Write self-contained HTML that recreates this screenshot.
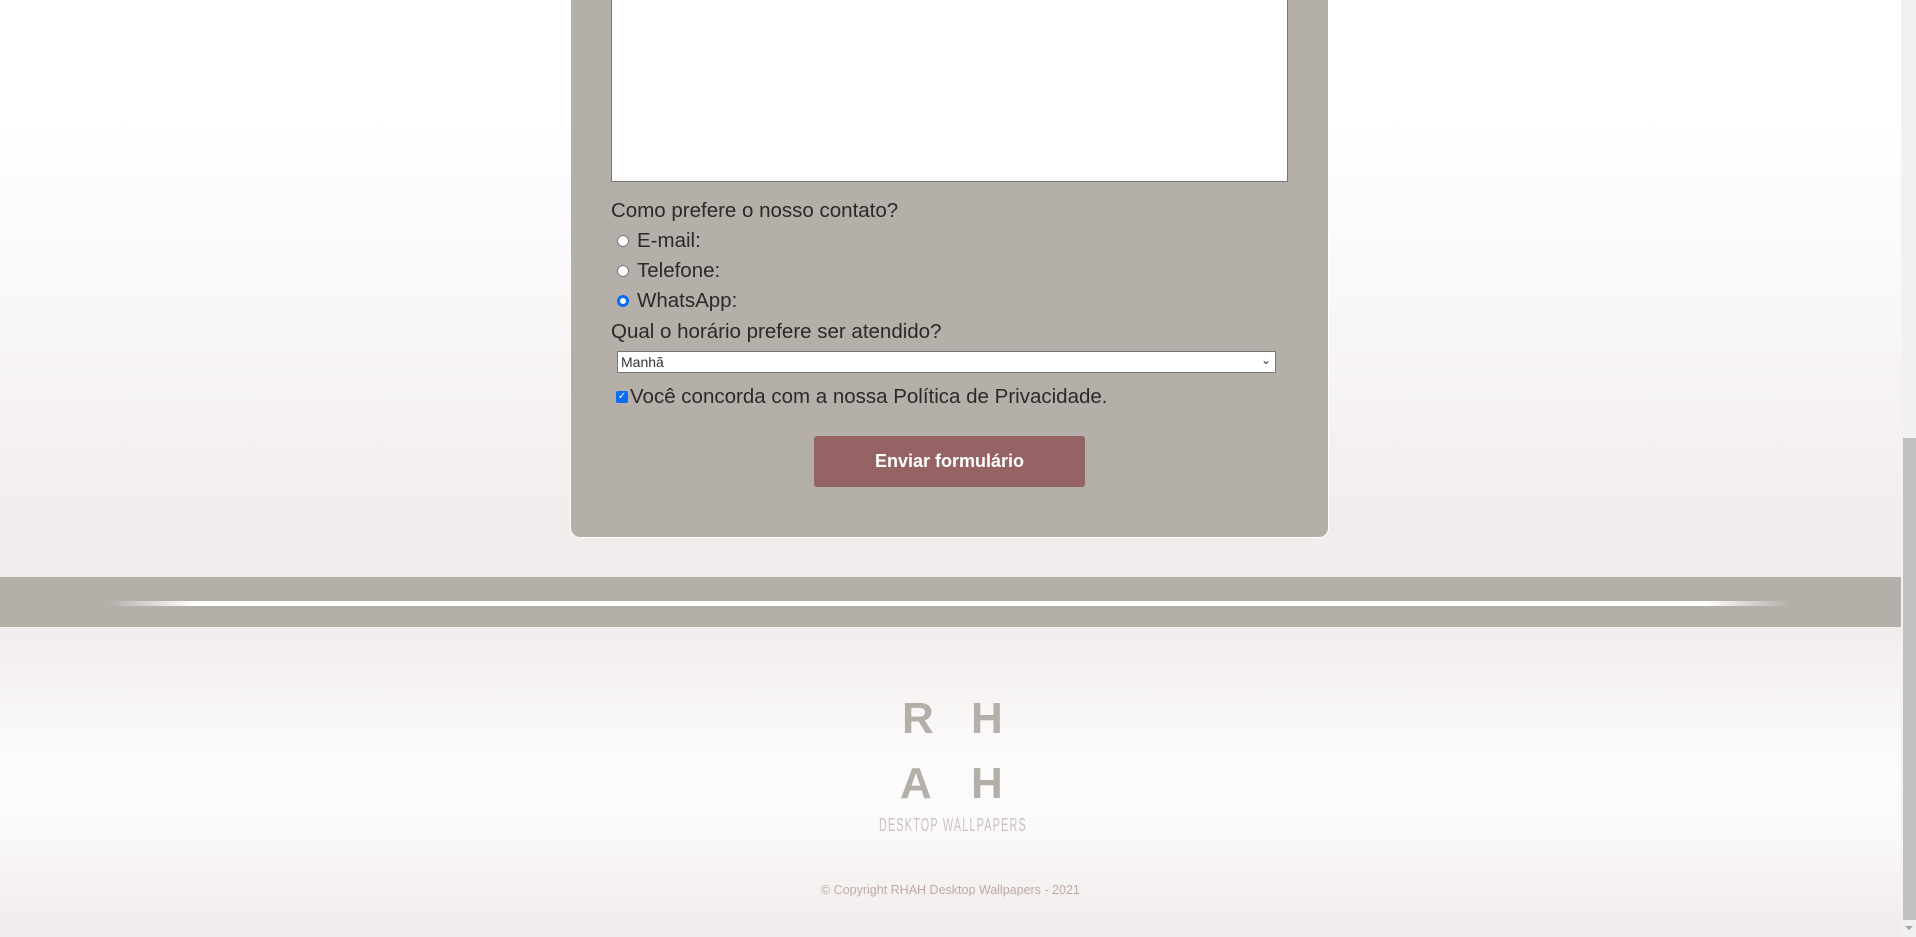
<!DOCTYPE html>
<html><head><meta charset="utf-8"><style>
body{margin:0;width:1916px;height:937px;overflow:hidden;position:relative;font-family:"Liberation Sans",sans-serif;background:linear-gradient(#fff 0px,#fff 120px,#f1ebeb 570px);}
.foot{position:absolute;left:0;top:627px;width:1901px;height:310px;background:linear-gradient(#f2eded 0px,#fdfcfc 150px,#fbf9f9 200px,#f1ebeb 310px);}
.card{position:absolute;left:570px;top:-20px;width:757px;height:557px;background:#b5afaa;border:1px solid #fff;border-top:none;border-radius:0 0 10px 10px;}
.ta{position:absolute;left:611px;top:-2px;width:675px;height:182px;background:#fff;border:1px solid #767676;}
.t{position:absolute;left:611px;font-size:20.5px;color:#2c2a28;white-space:nowrap;}
.r{position:absolute;left:617px;width:12px;height:12px;border-radius:50%;background:#fff;border:1px solid #767676;box-sizing:border-box;}
.sel{position:absolute;left:617px;top:351px;width:659px;height:22px;background:#fff;border:1px solid #767676;box-sizing:border-box;font-size:14px;color:#333;padding:2px 3px;}
.btn{position:absolute;left:814px;top:436px;width:271px;height:51px;background:#956363;border-radius:3px;color:#fff;font-weight:bold;font-size:18px;text-align:center;line-height:51px;}
.band{position:absolute;left:0;top:577px;width:1901px;height:50px;background:#b5afaa;}
.line{position:absolute;left:108px;top:601px;width:1682px;height:5px;background:linear-gradient(90deg,rgba(255,255,255,0),#fff 5%,#fff 95%,rgba(255,255,255,0));}
.logo{position:absolute;color:#b5afaa;font-size:44px;font-weight:bold;font-family:"Liberation Sans",sans-serif;}
.sb{position:absolute;left:1901px;top:0;width:15px;height:937px;background:#f1f1f1;}
.th{position:absolute;left:1903px;top:438px;width:13px;height:482px;background:#c1c1c1;}
</style></head><body>
<div class="foot"></div>
<div class="card"></div>
<div class="ta"></div>
<div class="t" style="top:199px">Como prefere o nosso contato?</div>
<div class="r" style="top:235px"></div><div class="t" style="left:637px;top:229px">E-mail:</div>
<div class="r" style="top:265px"></div><div class="t" style="left:637px;top:259px">Telefone:</div>
<div class="r" style="top:295px;border:3.5px solid #0a6cf5"></div><div class="t" style="left:637px;top:289px">WhatsApp:</div>
<div class="t" style="top:320px">Qual o horário prefere ser atendido?</div>
<div class="sel">Manhã<span style="position:absolute;right:4px;top:1px;font-size:12px">&#8964;</span></div>
<div style="position:absolute;left:616px;top:391px;width:12px;height:12px;background:#0a6cf5;border-radius:2px;color:#fff;font-size:10px;line-height:12px;text-align:center">✓</div>
<div class="t" style="left:630px;top:385px">Você concorda com a nossa Política de Privacidade.</div>
<div class="btn">Enviar formulário</div>
<div class="band"></div><div class="line"></div>
<div class="logo" style="left:902px;top:694px">R</div><div class="logo" style="left:971px;top:694px">H</div>
<div class="logo" style="left:900px;top:759px">A</div><div class="logo" style="left:971px;top:759px">H</div>
<div style="position:absolute;left:879px;top:815px;font-size:18px;color:#c8c3c0;letter-spacing:2px;transform:scaleX(0.6);transform-origin:left;white-space:nowrap">DESKTOP WALLPAPERS</div>
<div style="position:absolute;left:821px;top:883px;font-size:12.5px;color:#c0a8a8;white-space:nowrap">© Copyright RHAH Desktop Wallpapers - 2021</div>
<div class="sb"></div><div class="th"></div>
<div style="position:absolute;left:1905px;top:926px;width:0;height:0;border-left:4px solid transparent;border-right:4px solid transparent;border-top:4px solid #a3a3a3"></div>
</body></html>
